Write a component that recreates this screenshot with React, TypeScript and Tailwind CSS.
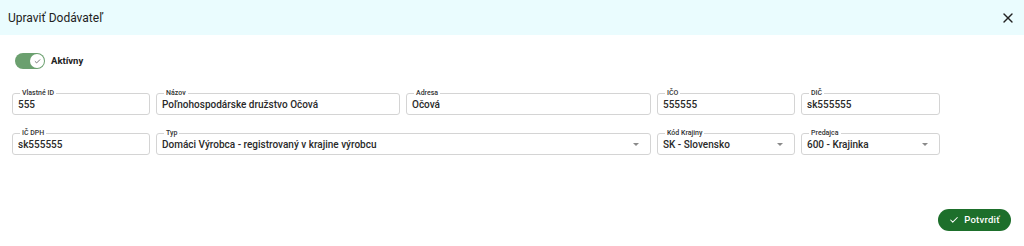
import React from "react";
import { X, Check } from "lucide-react";

type FieldProps = {
  label: string;
  value: string;
  select?: boolean;
  className?: string;
};

const Field = ({ label, value, select, className }: FieldProps) => {
  return (
    <div
      className={`relative h-[22px] rounded-[3px] border border-[#d4d4d4] flex items-center pl-[5px] pr-[8px] ${className ?? ""}`}
    >
      <span className="absolute -top-[6px] left-[7px] bg-white px-[2px] text-[7px] leading-[10px] font-medium text-[#333]">
        {label}
      </span>
      <span className="flex-1 text-[10px] font-medium text-[#2a2a2a] leading-none pt-[1px] whitespace-nowrap">
        {value}
      </span>
      {select && (
        <svg width="8" height="5" viewBox="0 0 8 5" className="mr-[2px]">
          <path d="M1 1 L4 4 L7 1 Z" fill="#8a8a8a" />
        </svg>
      )}
    </div>
  );
};

const App = () => {
  return (
    <div
      className="w-[1024px] h-[246px] bg-white flex flex-col"
      style={{ fontFamily: "Roboto, 'Liberation Sans', sans-serif" }}
    >
      {/* header */}
      <div className="h-[35px] bg-[#eafcfe] flex items-center justify-between pl-[8px] pr-[8px]">
        <span className="text-[12px] text-[#222]">Upraviť Dodávateľ</span>
        <X size={16} strokeWidth={2} className="text-[#222]" />
      </div>

      <div className="flex-1 flex flex-col px-[12px] pt-[18px]">
        {/* toggle */}
        <div className="flex items-center gap-[6px] pl-[3px]">
          <div className="w-[30px] h-[16px] rounded-full bg-[#6ba06f] flex items-center justify-end pr-[1px]">
            <div className="w-[14px] h-[14px] rounded-full bg-white flex items-center justify-center">
              <Check size={7} strokeWidth={2.5} className="text-[#444]" />
            </div>
          </div>
          <span className="text-[9.5px] font-bold text-[#222]">Aktívny</span>
        </div>

        {/* fields */}
        <div className="mt-[24px] grid grid-cols-[138px_244px_245px_138px_139px] gap-x-[6px] gap-y-[18px]">
          <Field label="Vlastné ID" value="555" />
          <Field label="Názov" value="Poľnohospodárske družstvo Očová" />
          <Field label="Adresa" value="Očová" />
          <Field label="IČO" value="555555" />
          <Field label="DIČ" value="sk555555" />

          <Field label="IČ DPH" value="sk555555" />
          <Field
            label="Typ"
            value="Domáci Výrobca - registrovaný v krajine výrobcu"
            select
            className="col-span-2"
          />
          <Field label="Kód Krajiny" value="SK - Slovensko" select />
          <Field label="Predajca" value="600 - Krajinka" select />
        </div>

        {/* footer */}
        <div className="mt-auto mb-[15px] flex justify-end pr-[1px]">
          <button className="h-[22px] w-[73px] rounded-full bg-[#1d6f2b] text-white text-[9.5px] font-medium flex items-center justify-center gap-[5px] tracking-wide">
            <Check size={10} strokeWidth={2.5} />
            Potvrdiť
          </button>
        </div>
      </div>
    </div>
  );
};

export default App;
